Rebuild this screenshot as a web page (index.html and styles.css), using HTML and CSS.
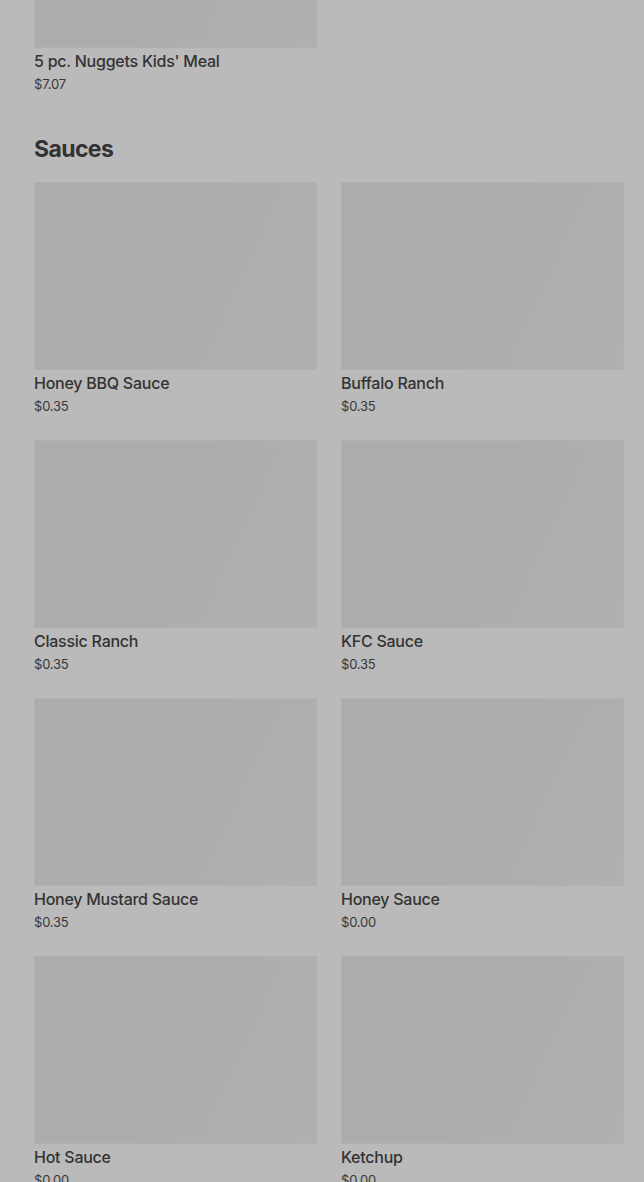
FILE: index.html
```html
<html>

<head>
    <meta http-equiv="Content-Type" content="text/html" charset="utf-8">
    <title>Menu - Sauces</title>
    <link rel="stylesheet" href="styles.css">
</head>

<body>
    <div class="menu">
        <div class="section first">
            <div class="grid">
                <div class="item">
                    <div class="thumb"></div>
                    <div class="name">5 pc. Nuggets Kids' Meal</div>
                    <div class="price">$7.07</div>
                </div>
            </div>
        </div>

        <div class="section">
            <h2 class="title">Sauces</h2>
            <div class="grid">
                <div class="item">
                    <div class="thumb"></div>
                    <div class="name">Honey BBQ Sauce</div>
                    <div class="price">$0.35</div>
                </div>
                <div class="item">
                    <div class="thumb"></div>
                    <div class="name">Buffalo Ranch</div>
                    <div class="price">$0.35</div>
                </div>
                <div class="item">
                    <div class="thumb"></div>
                    <div class="name">Classic Ranch</div>
                    <div class="price">$0.35</div>
                </div>
                <div class="item">
                    <div class="thumb"></div>
                    <div class="name">KFC Sauce</div>
                    <div class="price">$0.35</div>
                </div>
                <div class="item">
                    <div class="thumb"></div>
                    <div class="name">Honey Mustard Sauce</div>
                    <div class="price">$0.35</div>
                </div>
                <div class="item">
                    <div class="thumb"></div>
                    <div class="name">Honey Sauce</div>
                    <div class="price">$0.00</div>
                </div>
                <div class="item">
                    <div class="thumb"></div>
                    <div class="name">Hot Sauce</div>
                    <div class="price">$0.00</div>
                </div>
                <div class="item">
                    <div class="thumb"></div>
                    <div class="name">Ketchup</div>
                    <div class="price">$0.00</div>
                </div>
            </div>
        </div>
    </div>
</body>

</html>
```

FILE: styles.css
```css
body {
    margin: 0;
    background-color: #bababa;
    font-family: Inter, "Noto Sans", sans-serif;
    color: #333333;
    overflow: hidden;
}

.menu {
    padding: 0 20px 0 34px;
    margin-top: -140px;
}

.grid {
    display: grid;
    grid-template-columns: repeat(2, 283px);
    column-gap: 24px;
    row-gap: 22px;
}

.section.first {
    margin-bottom: 38px;
}

.title {
    margin: 0 0 17px 0;
    font-size: 23px;
    line-height: 31px;
    font-weight: 700;
    letter-spacing: -0.6px;
    color: #333333;
}

.thumb {
    height: 188px;
    background: linear-gradient(115deg, #acacac 45%, #b0b0b0 100%);
    box-shadow: inset 0 0 0 1px #b1b1b1;
}

.name {
    margin-top: 1px;
    font-size: 16px;
    line-height: 24px;
    font-weight: 500;
    letter-spacing: -0.25px;
}

.price {
    font-size: 13px;
    line-height: 23px;
    letter-spacing: -0.2px;
    color: #383838;
}
```
